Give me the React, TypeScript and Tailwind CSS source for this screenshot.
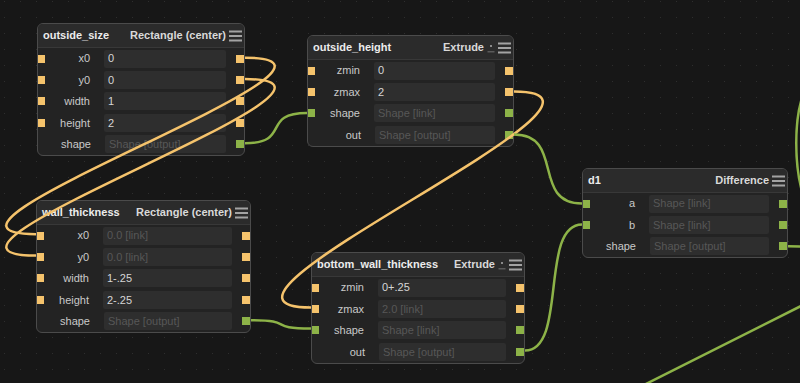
import React from "react";

type Port = "o" | "g" | null;
type Row = { label: string; value: string; dim?: boolean; l: Port; r: Port };
type NodeDef = {
  x: number;
  y: number;
  w: number;
  title: string;
  type: string;
  extra?: boolean;
  rows: Row[];
};

const nodes: NodeDef[] = [
  {
    x: 37,
    y: 23,
    w: 208,
    title: "outside_size",
    type: "Rectangle (center)",
    rows: [
      { label: "x0", value: "0", l: "o", r: "o" },
      { label: "y0", value: "0", l: "o", r: "o" },
      { label: "width", value: "1", l: "o", r: "o" },
      { label: "height", value: "2", l: "o", r: "o" },
      { label: "shape", value: "Shape [output]", dim: true, l: null, r: "g" },
    ],
  },
  {
    x: 307,
    y: 35,
    w: 207,
    title: "outside_height",
    type: "Extrude",
    extra: true,
    rows: [
      { label: "zmin", value: "0", l: "o", r: "o" },
      { label: "zmax", value: "2", l: "o", r: "o" },
      { label: "shape", value: "Shape [link]", dim: true, l: "g", r: "g" },
      { label: "out", value: "Shape [output]", dim: true, l: null, r: "g" },
    ],
  },
  {
    x: 36,
    y: 200,
    w: 215,
    title: "wall_thickness",
    type: "Rectangle (center)",
    rows: [
      { label: "x0", value: "0.0 [link]", dim: true, l: "o", r: "o" },
      { label: "y0", value: "0.0 [link]", dim: true, l: "o", r: "o" },
      { label: "width", value: "1-.25", l: "o", r: "o" },
      { label: "height", value: "2-.25", l: "o", r: "o" },
      { label: "shape", value: "Shape [output]", dim: true, l: null, r: "g" },
    ],
  },
  {
    x: 311,
    y: 252,
    w: 214,
    title: "bottom_wall_thickness",
    type: "Extrude",
    extra: true,
    rows: [
      { label: "zmin", value: "0+.25", l: "o", r: "o" },
      { label: "zmax", value: "2.0 [link]", dim: true, l: "o", r: "o" },
      { label: "shape", value: "Shape [link]", dim: true, l: "g", r: "g" },
      { label: "out", value: "Shape [output]", dim: true, l: null, r: "g" },
    ],
  },
  {
    x: 582,
    y: 168,
    w: 206,
    title: "d1",
    type: "Difference",
    rows: [
      { label: "a", value: "Shape [link]", dim: true, l: "g", r: "g" },
      { label: "b", value: "Shape [link]", dim: true, l: "g", r: "g" },
      { label: "shape", value: "Shape [output]", dim: true, l: null, r: "g" },
    ],
  },
];

const ORANGE = "#f5c36c";
const GREEN = "#8db348";

function PortBox({ c, side }: { c: Port; side: "l" | "r" }) {
  if (!c) return <div className="w-[8px] h-[8px] shrink-0" />;
  return (
    <div
      className={
        "w-[8px] h-[8px] shrink-0 " +
        (c === "o" ? "bg-[#f5c36c] " : "bg-[#8db348] ") +
        (side === "l" ? "-ml-px" : "")
      }
    />
  );
}

function Hamburger() {
  return (
    <svg width="13" height="12" viewBox="0 0 13 12" className="shrink-0">
      <rect x="0" y="0.5" width="13" height="2" fill="#a3a3a3" />
      <rect x="0" y="5" width="13" height="2" fill="#a3a3a3" />
      <rect x="0" y="9.5" width="13" height="2" fill="#a3a3a3" />
    </svg>
  );
}

function MiniIcon() {
  return (
    <svg width="8" height="12" viewBox="0 0 8 12" className="shrink-0 mr-[3px]">
      <rect x="3" y="3" width="2" height="2" fill="#8a8a8a" />
      <rect x="0.5" y="9" width="7" height="1.5" fill="#5a5a5a" />
    </svg>
  );
}

function Node({ n }: { n: NodeDef }) {
  return (
    <div
      className="absolute rounded-[6px] border border-[#4b4b4b] bg-[#232323] overflow-hidden"
      style={{ left: n.x, top: n.y, width: n.w }}
    >
      <div className="h-[24px] border-b border-[#383838] bg-[#2b2b2b] flex items-center pl-[5px] pr-[2px]">
        <div className="flex-1 font-bold text-[11px] text-[#ececec] whitespace-nowrap">{n.title}</div>
        <div className="font-bold text-[11px] text-[#d9d9d9] whitespace-nowrap mr-[3px]">{n.type}</div>
        {n.extra && <MiniIcon />}
        <Hamburger />
      </div>
      <div>
        {n.rows.map((r, i) => (
          <div key={i} className="h-[21.4px] flex items-center">
            <PortBox c={r.l} side="l" />
            <div className="w-[45px] shrink-0 text-right text-[11px] text-[#c9c9c9] whitespace-nowrap">
              {r.label}
            </div>
            <div
              className={
                "ml-[14px] mr-[10px] flex-1 h-[18px] bg-[#2e2e2e] rounded-[2px] px-[4px] flex items-center text-[11px] whitespace-nowrap overflow-hidden " +
                (r.dim ? "text-[#575757]" : "text-[#d6d6d6]")
              }
            >
              {r.value}
            </div>
            <PortBox c={r.r} side="r" />
          </div>
        ))}
      </div>
    </div>
  );
}

function wire(x0: number, y0: number, x1: number, y1: number) {
  const d = Math.abs(x1 - x0) * 0.75;
  return `M ${x0} ${y0} C ${x0 + d} ${y0}, ${x1 - d} ${y1}, ${x1} ${y1}`;
}

const wires: { d: string; c: string }[] = [
  { d: wire(245, 57.7, 36, 234.2), c: ORANGE },
  { d: wire(245, 79.1, 36, 255.6), c: ORANGE },
  { d: wire(245, 143.3, 307, 113), c: GREEN },
  { d: wire(514, 91.5, 311, 307.5), c: ORANGE },
  { d: wire(514, 134.5, 582, 203.5), c: GREEN },
  { d: wire(251, 320.3, 311, 328.5), c: GREEN },
  { d: wire(525, 350.5, 582, 224.5), c: GREEN },
  { d: "M 788 246.3 C 860 246.3, 870 270, 805 304 L 630 392", c: GREEN },
  { d: "M 803 95 C 794 120, 794 165, 803 195", c: GREEN },
];

export default function App() {
  return (
    <div
      className="relative w-[800px] h-[383px] overflow-hidden bg-[#171717]"
      style={{ fontFamily: '"Liberation Sans", Arial, sans-serif' }}
    >
      <svg className="absolute inset-0" width="800" height="383">
        <defs>
          <pattern id="dots" x="4" y="1" width="16" height="16" patternUnits="userSpaceOnUse">
            <rect x="0" y="0" width="1" height="1" fill="#2e2e2e" />
          </pattern>
        </defs>
        <rect width="800" height="383" fill="url(#dots)" />
      </svg>
      {nodes.map((n, i) => (
        <Node key={i} n={n} />
      ))}
      <svg className="absolute inset-0 pointer-events-none" width="800" height="383">
        {wires.map((w, i) => (
          <path key={i} d={w.d} stroke={w.c} strokeWidth="2.5" fill="none" />
        ))}
      </svg>
    </div>
  );
}
